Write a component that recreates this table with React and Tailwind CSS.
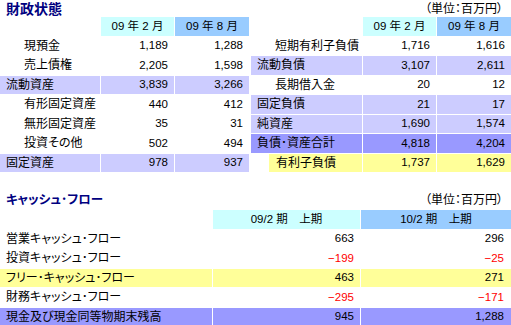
import React from 'react';

const assets = [
  { label: '現預金', a: '1,189', b: '1,288', indent: true },
  { label: '売上債権', a: '2,205', b: '1,598', indent: true },
  { label: '流動資産', a: '3,839', b: '3,266', bg: 'bg-[#ccccff]' },
  { label: '有形固定資産', a: '440', b: '412', indent: true },
  { label: '無形固定資産', a: '35', b: '31', indent: true },
  { label: '投資その他', a: '502', b: '494', indent: true },
  { label: '固定資産', a: '978', b: '937', bg: 'bg-[#ccccff]' },
];

const liabilities = [
  { label: '短期有利子負債', a: '1,716', b: '1,616', indent: true },
  { label: '流動負債', a: '3,107', b: '2,611', bg: 'bg-[#ccccff]' },
  { label: '長期借入金', a: '20', b: '12', indent: true },
  { label: '固定負債', a: '21', b: '17', bg: 'bg-[#ccccff]' },
  { label: '純資産', a: '1,690', b: '1,574', bg: 'bg-[#ccccff]' },
  { label: '負債･資産合計', a: '4,818', b: '4,204', bg: 'bg-[#9999ff]' },
  { label: '有利子負債', a: '1,737', b: '1,629', bg: 'bg-[#ffff99]', inset: true },
];

const cashflow = [
  { label: '営業キャッシュ･フロー', a: '663', b: '296' },
  { label: '投資キャッシュ･フロー', a: '−199', b: '−25', neg: true },
  { label: 'フリー･キャッシュ･フロー', a: '463', b: '271', bg: 'bg-[#ffff99]' },
  { label: '財務キャッシュ･フロー', a: '−295', b: '−171', neg: true },
  { label: '現金及び現金同等物期末残高', a: '945', b: '1,288', bg: 'bg-[#9999ff]' },
];

const Header = ({ left, right }) => (
  <>
    <div />
    <div className="bg-[#ccffff] flex items-center justify-center text-[11.5px]">{left}</div>
    <div className="bg-[#99ccff] flex items-center justify-center text-[11.5px]">{right}</div>
  </>
);

const BalanceRows = ({ rows }) =>
  rows.map((r) => (
    <React.Fragment key={r.label}>
      {r.inset ? (
        <div className="pl-[18px] flex">
          <div className={`${r.bg} flex-1 flex items-center pl-[7px]`}>{r.label}</div>
        </div>
      ) : (
        <div className={`${r.bg || ''} flex items-center ${r.indent ? 'pl-[24px]' : 'pl-[6px]'}`}>
          {r.label}
        </div>
      )}
      <div className={`${r.bg || ''} flex items-center justify-end pr-[6px] text-[11.5px]`}>{r.a}</div>
      <div className={`${r.bg || ''} flex items-center justify-end pr-[6px] text-[11.5px]`}>{r.b}</div>
    </React.Fragment>
  ));

export default function App() {
  return (
    <div className="w-[511px] h-[325px] overflow-hidden bg-white text-black text-[12px] [font-family:'Liberation_Sans','Noto_Sans_CJK_JP',sans-serif] [font-feature-settings:'palt']">
      <div className="flex items-center justify-between h-[17px]">
        <div className="pl-[6px] text-[14px] font-bold text-[#000080] leading-none">財政状態</div>
        <div className="pr-[8px] leading-none">（単位：百万円）</div>
      </div>

      <div className="flex gap-[2px]">
        <div className="grid grid-cols-[100px_73px_74px] auto-rows-[18.5px] gap-[1px] w-[249px]">
          <Header left="09 年 2 月" right="09 年 8 月" />
          <BalanceRows rows={assets} />
        </div>
        <div className="grid grid-cols-[111px_73px_74px] auto-rows-[18.5px] gap-[1px] w-[260px]">
          <Header left="09 年 2 月" right="09 年 8 月" />
          <BalanceRows rows={liabilities} />
        </div>
      </div>

      <div className="flex items-center justify-between h-[19px] mt-[18.5px]">
        <div className="pl-[6px] text-[12.5px] font-bold text-[#000080] leading-none">キャッシュ･フロー</div>
        <div className="pr-[8px] leading-none">（単位：百万円）</div>
      </div>

      <div className="grid grid-cols-[212px_147px_150px] auto-rows-[18.5px] gap-[1px] mt-[0.5px]">
        <Header left="09/2 期　上期" right="10/2 期　上期" />
        {cashflow.map((r) => (
          <React.Fragment key={r.label}>
            <div className={`${r.bg || ''} flex items-center pl-[6px]`}>{r.label}</div>
            <div className={`${r.bg || ''} ${r.neg ? 'text-[#ff0000]' : ''} flex items-center justify-end pr-[6px] text-[11.5px]`}>
              {r.a}
            </div>
            <div className={`${r.bg || ''} ${r.neg ? 'text-[#ff0000]' : ''} flex items-center justify-end pr-[7px] text-[11.5px]`}>
              {r.b}
            </div>
          </React.Fragment>
        ))}
      </div>
    </div>
  );
}
